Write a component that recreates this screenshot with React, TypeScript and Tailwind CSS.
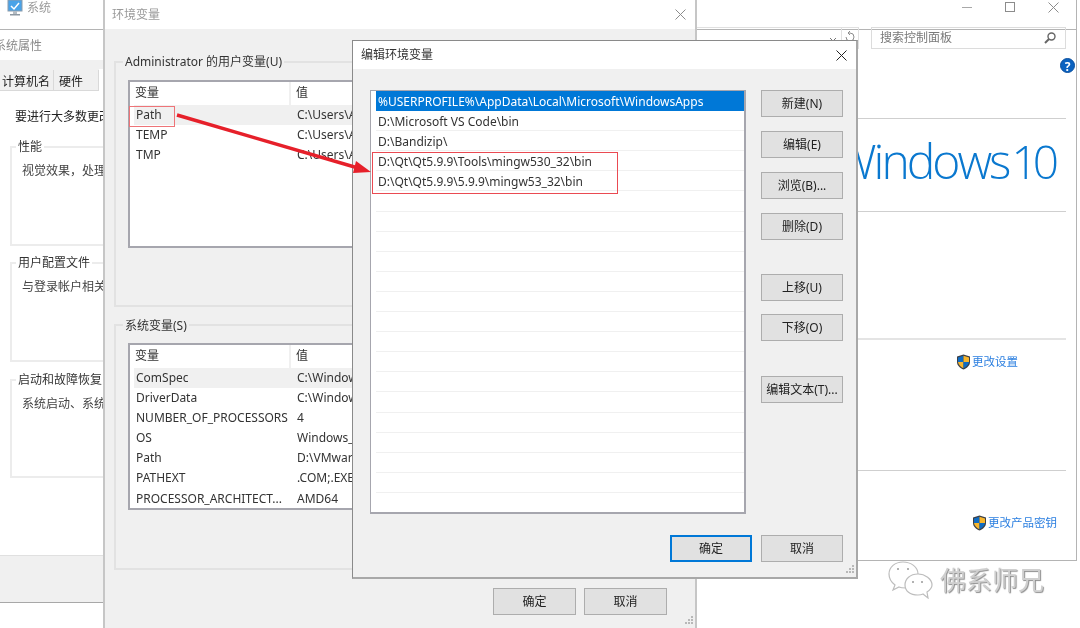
import React from 'react'

const sans = 'font-["Segoe_UI","Noto_Sans","Noto_Sans_CJK_SC",sans-serif]'

function WinButton({ label, primary, className = '' }: { label: string; primary?: boolean; className?: string }) {
    return (
        <button
            className={`w-[82px] h-[27px] shrink-0 bg-[#e1e1e1] text-[12px] text-[#222] whitespace-nowrap ${primary ? 'border-2 border-[#0078d7]' : 'border border-[#adadad]'} ${className}`}
        >
            {label}
        </button>
    )
}

function Grip() {
    return (
        <svg width="12" height="12" viewBox="0 0 12 12" className="absolute right-[1px] bottom-[1px]">
            {[[9, 1], [6, 4], [9, 4], [3, 7], [6, 7], [9, 7]].map(([x, y]) => (
                <rect key={`${x}-${y}`} x={x} y={y} width="2" height="2" fill="#b8b8b8" />
            ))}
        </svg>
    )
}

function Shield() {
    return (
        <svg width="15" height="16" viewBox="0 0 15 16" className="shrink-0">
            <path d="M7.5 0.5 L14 2.5 V8 C14 11.5 11 14 7.5 15.5 C4 14 1 11.5 1 8 V2.5 Z" fill="#3b3f46" />
            <path d="M7.5 1.8 V8 H2 V3.4 Z" fill="#0f6cc4" />
            <path d="M7.5 1.8 L13 3.4 V8 H7.5 Z" fill="#f8b62c" />
            <path d="M2 8 H7.5 V14.2 C4.8 13 2.4 11 2 8 Z" fill="#f8b62c" />
            <path d="M7.5 8 H13 C12.6 11 10.2 13 7.5 14.2 Z" fill="#0f6cc4" />
        </svg>
    )
}

function GroupBox({ title, text, height, className = '' }: { title: string; text: string; height: string; className?: string }) {
    return (
        <div className={`relative ml-[10px] w-[120px] border-2 border-[#ececec] ${height} ${className}`}>
            <span className="absolute left-[4px] top-[-10px] bg-white px-[2px] text-[12px] leading-[18px] text-[#333] whitespace-nowrap">{title}</span>
            <p className="pl-[10px] pt-[14px] text-[12px] leading-[18px] text-[#444] whitespace-nowrap">{text}</p>
        </div>
    )
}

function SystemWindow() {
    return (
        <div className="absolute left-0 top-0 w-[1077px] h-[561px] bg-white border-r border-b border-[#b4b4b4]">
            <div className="flex items-center h-[30px] border-b border-[#b4b4b4]" />
            <div className="absolute left-[7px] top-[-2px] flex items-center gap-[4px]">
                <svg width="16" height="16" viewBox="0 0 16 16">
                    <rect x="1" y="0" width="14" height="11" fill="#4aa3e8" stroke="#8b9bab" />
                    <path d="M4 6 L7 9 L12 3" fill="none" stroke="#fff" strokeWidth="1.5" />
                    <rect x="6" y="11" width="4" height="3" fill="#b5bcc3" />
                    <rect x="3" y="14" width="10" height="1.5" fill="#8d98a2" />
                </svg>
                <span className="text-[12px] leading-[20px] text-[#9a9a9a]">系统</span>
            </div>
            {/* right column, the part not hidden by the dialogs */}
            <div className="absolute left-[696px] top-0 w-[380px] h-[560px]">
                <div className="flex justify-end items-center h-[14px] pr-[17px] gap-[33px]">
                    <div className="w-[10px] h-px bg-[#a8a8a8]" />
                    <div className="w-[10px] h-[10px] border border-[#8c8c8c]" />
                    <svg width="11" height="11" viewBox="0 0 11 11"><path d="M0.5 0.5 L10.5 10.5 M10.5 0.5 L0.5 10.5" stroke="#8c8c8c" /></svg>
                </div>
                <div className="flex items-start mt-[13px] h-[22px]">
                    <div className="w-[163px] h-[22px] border border-[#e0e0e0] flex justify-end items-start">
                        <svg width="10" height="10" viewBox="0 0 10 10" className="mt-[8px] mr-[3px]"><path d="M2 2 L5 5 L8 2" fill="none" stroke="#777" /></svg>
                        <div className="w-px h-[20px] bg-[#e0e0e0]" />
                        <svg width="12" height="12" viewBox="0 0 12 12" className="mx-[2px] mt-[3px]"><path d="M2 6 A4 4 0 1 0 6 2 H4 M6 0 L4 2 L6 4" fill="none" stroke="#8c8c8c" /></svg>
                    </div>
                    <div className="ml-[12px] w-[195px] h-[22px] border border-[#dcdcdc] flex items-center justify-between px-[8px] text-[12px] text-[#7a7a7a]">
                        <span>搜索控制面板</span>
                        <svg width="14" height="14" viewBox="0 0 14 14"><circle cx="8.5" cy="5.5" r="3.5" fill="none" stroke="#666" strokeWidth="1.4" /><path d="M6 8 L2 12" stroke="#666" strokeWidth="2" /></svg>
                    </div>
                </div>
                <div className="flex justify-end pr-[1px] mt-[9px]">
                    <div className="w-[15px] h-[15px] rounded-full bg-[#0b62c0] text-white text-[12px] leading-[15px] font-bold text-center border border-[#0a4f9e]">?</div>
                </div>
                <div className="ml-[161px] mr-[10px] mt-[45px] h-px bg-[#cfcfcf]" />
                <div className="flex justify-end items-baseline pr-[22px] mt-[12px] h-[60px] font-['Open_Sans',sans-serif] font-light leading-[60px] text-[#0a78cf] whitespace-nowrap">
                    <span className="text-[48px] tracking-[-3px]">Windows</span>
                    <span className="ml-[3px] text-[46px] tracking-[-5px]">10</span>
                </div>
                <div className="ml-[161px] mr-[10px] mt-[20px] h-px bg-[#cfcfcf]" />
                <div className="ml-[161px] mr-[10px] mt-[126px] h-[2px] bg-[#e4e4e4]" />
                <div className="flex items-center ml-[260px] mt-[13px] h-[18px] text-[11.5px] text-[#2b7fe0] whitespace-nowrap"><Shield /><span className="ml-[1px]">更改设置</span></div>
                <div className="ml-[161px] mr-[10px] mt-[99px] h-px bg-[#cfcfcf]" />
                <div className="flex items-center ml-[276px] mt-[43px] h-[18px] text-[11.5px] text-[#2b7fe0] whitespace-nowrap"><Shield /><span className="ml-[1px]">更改产品密钥</span></div>
            </div>
        </div>
    )
}

function SystemProps() {
    return (
        <div className="absolute left-0 top-[31px] w-[105px] h-[597px] overflow-hidden bg-white flex flex-col">
            <div className="h-[29px] flex items-center ml-[-6px] text-[12px] text-[#8a8a8a] whitespace-nowrap">系统属性</div>
            <div className="h-[31px] bg-[#f0f0f0] flex items-end">
                <div className="w-[54px] h-[21px] border-r border-b border-[#d9d9d9] text-[12px] leading-[23px] text-[#222] pl-[2px]">计算机名</div>
                <div className="w-[45px] h-[21px] border-r border-b border-[#d9d9d9] text-[12px] leading-[23px] text-[#222] pl-[5px]">硬件</div>
                <div className="flex-1 h-[22px] bg-white" />
            </div>
            <div className="h-[464px] flex flex-col">
                <p className="pl-[15px] pt-[17px] h-[55px] text-[12px] leading-[18px] text-[#222] whitespace-nowrap">要进行大多数更改</p>
                <GroupBox title="性能" text="视觉效果，处理器" height="h-[100px]" />
                <GroupBox title="用户配置文件" text="与登录帐户相关的" height="h-[100px]" className="mt-[16px]" />
                <GroupBox title="启动和故障恢复" text="系统启动、系统故" height="h-[99px]" className="mt-[17px]" />
            </div>
            <div className="h-[47px] bg-[#f0f0f0] border-t border-[#e0e0e0]" />
            <div className="flex-1 border-t border-[#a8a8a8]" />
        </div>
    )
}

function VarList({ rows, height }: { rows: [string, string][]; height: string }) {
    return (
        <div className={`ml-[12px] w-[240px] ${height} bg-white border-2 border-r-0 border-[#a6a6ae] overflow-hidden`}>
            <div className="flex h-[23px] text-[12px] leading-[22px] text-[#333]">
                <div className="w-[161px] pl-[5px] border-r-2 border-[#f0f0f0]">变量</div>
                <div className="pl-[5px]">值</div>
            </div>
            {rows.map(([name, value], i) => (
                <div key={name} className={`flex h-[20.1px] ml-[4px] text-[12px] leading-[20px] text-[#333] whitespace-nowrap ${i === 0 ? 'bg-[#f0f0f0]' : ''}`}>
                    <div className="w-[163px] pl-[2px]">{name}</div>
                    <div>{value}</div>
                </div>
            ))}
        </div>
    )
}

function EnvDialog() {
    return (
        <div className="absolute left-[103px] top-0 w-[594px] h-[628px] bg-[#f0f0f0] border-x-2 border-[#c6c6c6] flex flex-col">
            <div className="h-[29px] bg-white flex items-center justify-between pl-[7px] pr-[9px] text-[12px] text-[#9a9a9a]">
                <span>环境变量</span>
                <svg width="11" height="11" viewBox="0 0 11 11"><path d="M0.5 0.5 L10.5 10.5 M10.5 0.5 L0.5 10.5" stroke="#8c8c8c" /></svg>
            </div>
            <div className="relative mt-[32px] ml-[9px] mr-[10px] h-[246px] border-2 border-[#e2e2e2] pt-[17px]">
                <span className="absolute left-[7px] top-[-10px] bg-[#f0f0f0] px-[2px] text-[12px] leading-[18px] text-[#333]">Administrator 的用户变量(U)</span>
                <VarList height="h-[168px]" rows={[['Path', 'C:\\Users\\A'], ['TEMP', 'C:\\Users\\A'], ['TMP', 'C:\\Users\\A']]} />
            </div>
            <div className="relative mt-[17px] ml-[9px] mr-[10px] h-[246px] border-2 border-[#e2e2e2] pt-[17px]">
                <span className="absolute left-[7px] top-[-9px] bg-[#f0f0f0] px-[2px] text-[12px] leading-[18px] text-[#333]">系统变量(S)</span>
                <VarList
                    height="h-[167px]"
                    rows={[
                        ['ComSpec', 'C:\\Window'],
                        ['DriverData', 'C:\\Window'],
                        ['NUMBER_OF_PROCESSORS', '4'],
                        ['OS', 'Windows_'],
                        ['Path', 'D:\\VMwar'],
                        ['PATHEXT', '.COM;.EXE'],
                        ['PROCESSOR_ARCHITECT...', 'AMD64'],
                    ]}
                />
            </div>
            <div className="flex justify-end gap-[8px] mt-[18px] pr-[28px]">
                <WinButton label="确定" className="w-[83px]" />
                <WinButton label="取消" className="w-[83px]" />
            </div>
            <Grip />
        </div>
    )
}

const pathRows = [
    '%USERPROFILE%\\AppData\\Local\\Microsoft\\WindowsApps',
    'D:\\Microsoft VS Code\\bin',
    'D:\\Bandizip\\',
    'D:\\Qt\\Qt5.9.9\\Tools\\mingw530_32\\bin',
    'D:\\Qt\\Qt5.9.9\\5.9.9\\mingw53_32\\bin',
    ...Array.from({ length: 16 }, () => ''),
]

function EditDialog() {
    return (
        <div className="absolute left-[352px] top-[40px] w-[506px] h-[539px] bg-[#f0f0f0] border border-[#8a8a8a] border-r-2 border-b-2 border-r-[#a8a8a8] border-b-[#a8a8a8] flex flex-col">
            <div className="h-[28px] bg-white flex items-center justify-between pl-[8px] pr-[9px] text-[12px] text-[#333]">
                <span>编辑环境变量</span>
                <svg width="11" height="11" viewBox="0 0 11 11"><path d="M0.5 0.5 L10.5 10.5 M10.5 0.5 L0.5 10.5" stroke="#222" /></svg>
            </div>
            <div className="flex mt-[21px] ml-[17px]">
                <div className="w-[376px] h-[424px] bg-white border-2 border-[#a6a6ae] border-t border-l pl-[5px] overflow-hidden">
                    {pathRows.map((row, i) => (
                        <div key={i} className={`h-[20.1px] pl-[2px] text-[12px] leading-[21px] whitespace-nowrap ${i === 0 ? 'bg-[#0078d7] text-white' : 'text-[#333] border-b border-[#f0f0f0]'}`}>
                            {row}
                        </div>
                    ))}
                </div>
                <div className="flex flex-col ml-[15px]">
                    <WinButton label="新建(N)" />
                    <WinButton label="编辑(E)" className="mt-[14px]" />
                    <WinButton label="浏览(B)..." className="mt-[14px]" />
                    <WinButton label="删除(D)" className="mt-[14px]" />
                    <WinButton label="上移(U)" className="mt-[34px]" />
                    <WinButton label="下移(O)" className="mt-[13px]" />
                    <WinButton label="编辑文本(T)..." className="mt-[35px]" />
                </div>
            </div>
            <div className="flex justify-end gap-[9px] mt-[21px] pr-[13px]">
                <WinButton label="确定" primary />
                <WinButton label="取消" />
            </div>
            <Grip />
        </div>
    )
}

function Annotations() {
    return (
        <>
            <div className="absolute left-[129px] top-[106px] w-[46px] h-[21px] border-[1.5px] border-[#ee7478]" />
            <div className="absolute left-[372px] top-[152px] w-[246px] h-[42px] border-[1.5px] border-[#ea4a52]" />
            <svg width="1080" height="628" className="absolute left-0 top-0 pointer-events-none">
                <path d="M177 115 L358 168" stroke="#e6202a" strokeWidth="3.5" />
                <path d="M371 172 L356 161 L353 173 Z" fill="#e6202a" />
            </svg>
        </>
    )
}

function Watermark() {
    return (
        <div className="absolute left-[888px] top-[561px] flex items-center gap-[7px]">
            <svg width="45" height="38" viewBox="0 0 45 38" fill="#fff" stroke="#bdbdbd" strokeWidth="1.2">
                <path d="M15 1 C7 1 1 6 1 13 C1 18 3 21 7 24 L5 29 L11 26 C13 27 15 27 18 27 C25 27 30 20 30 13 C30 6 23 1 15 1 Z" />
                <path d="M30 13 C22 13 17 18 17 24 C17 30 22 34 30 34 C32 34 33 34 35 33 L40 37 L39 31 C42 29 44 27 44 24 C44 18 37 13 30 13 Z" />
                <circle cx="25" cy="21" r="1" fill="#999" stroke="none" />
                <circle cx="34" cy="21" r="1" fill="#999" stroke="none" />
                <circle cx="10" cy="8" r="1" fill="#999" stroke="none" />
                <circle cx="20" cy="8" r="1" fill="#999" stroke="none" />
            </svg>
            <span className="text-[26px] leading-[38px] text-[#cfcfcf] [text-shadow:1px_1px_1px_#8f8f8f] whitespace-nowrap">佛系师兄</span>
        </div>
    )
}

export default function App() {
    return (
        <div className={`relative w-[1080px] h-[628px] overflow-hidden bg-white blur-[0.35px] ${sans}`}>
            <SystemWindow />
            <SystemProps />
            <EnvDialog />
            <EditDialog />
            <Annotations />
            <Watermark />
        </div>
    )
}
